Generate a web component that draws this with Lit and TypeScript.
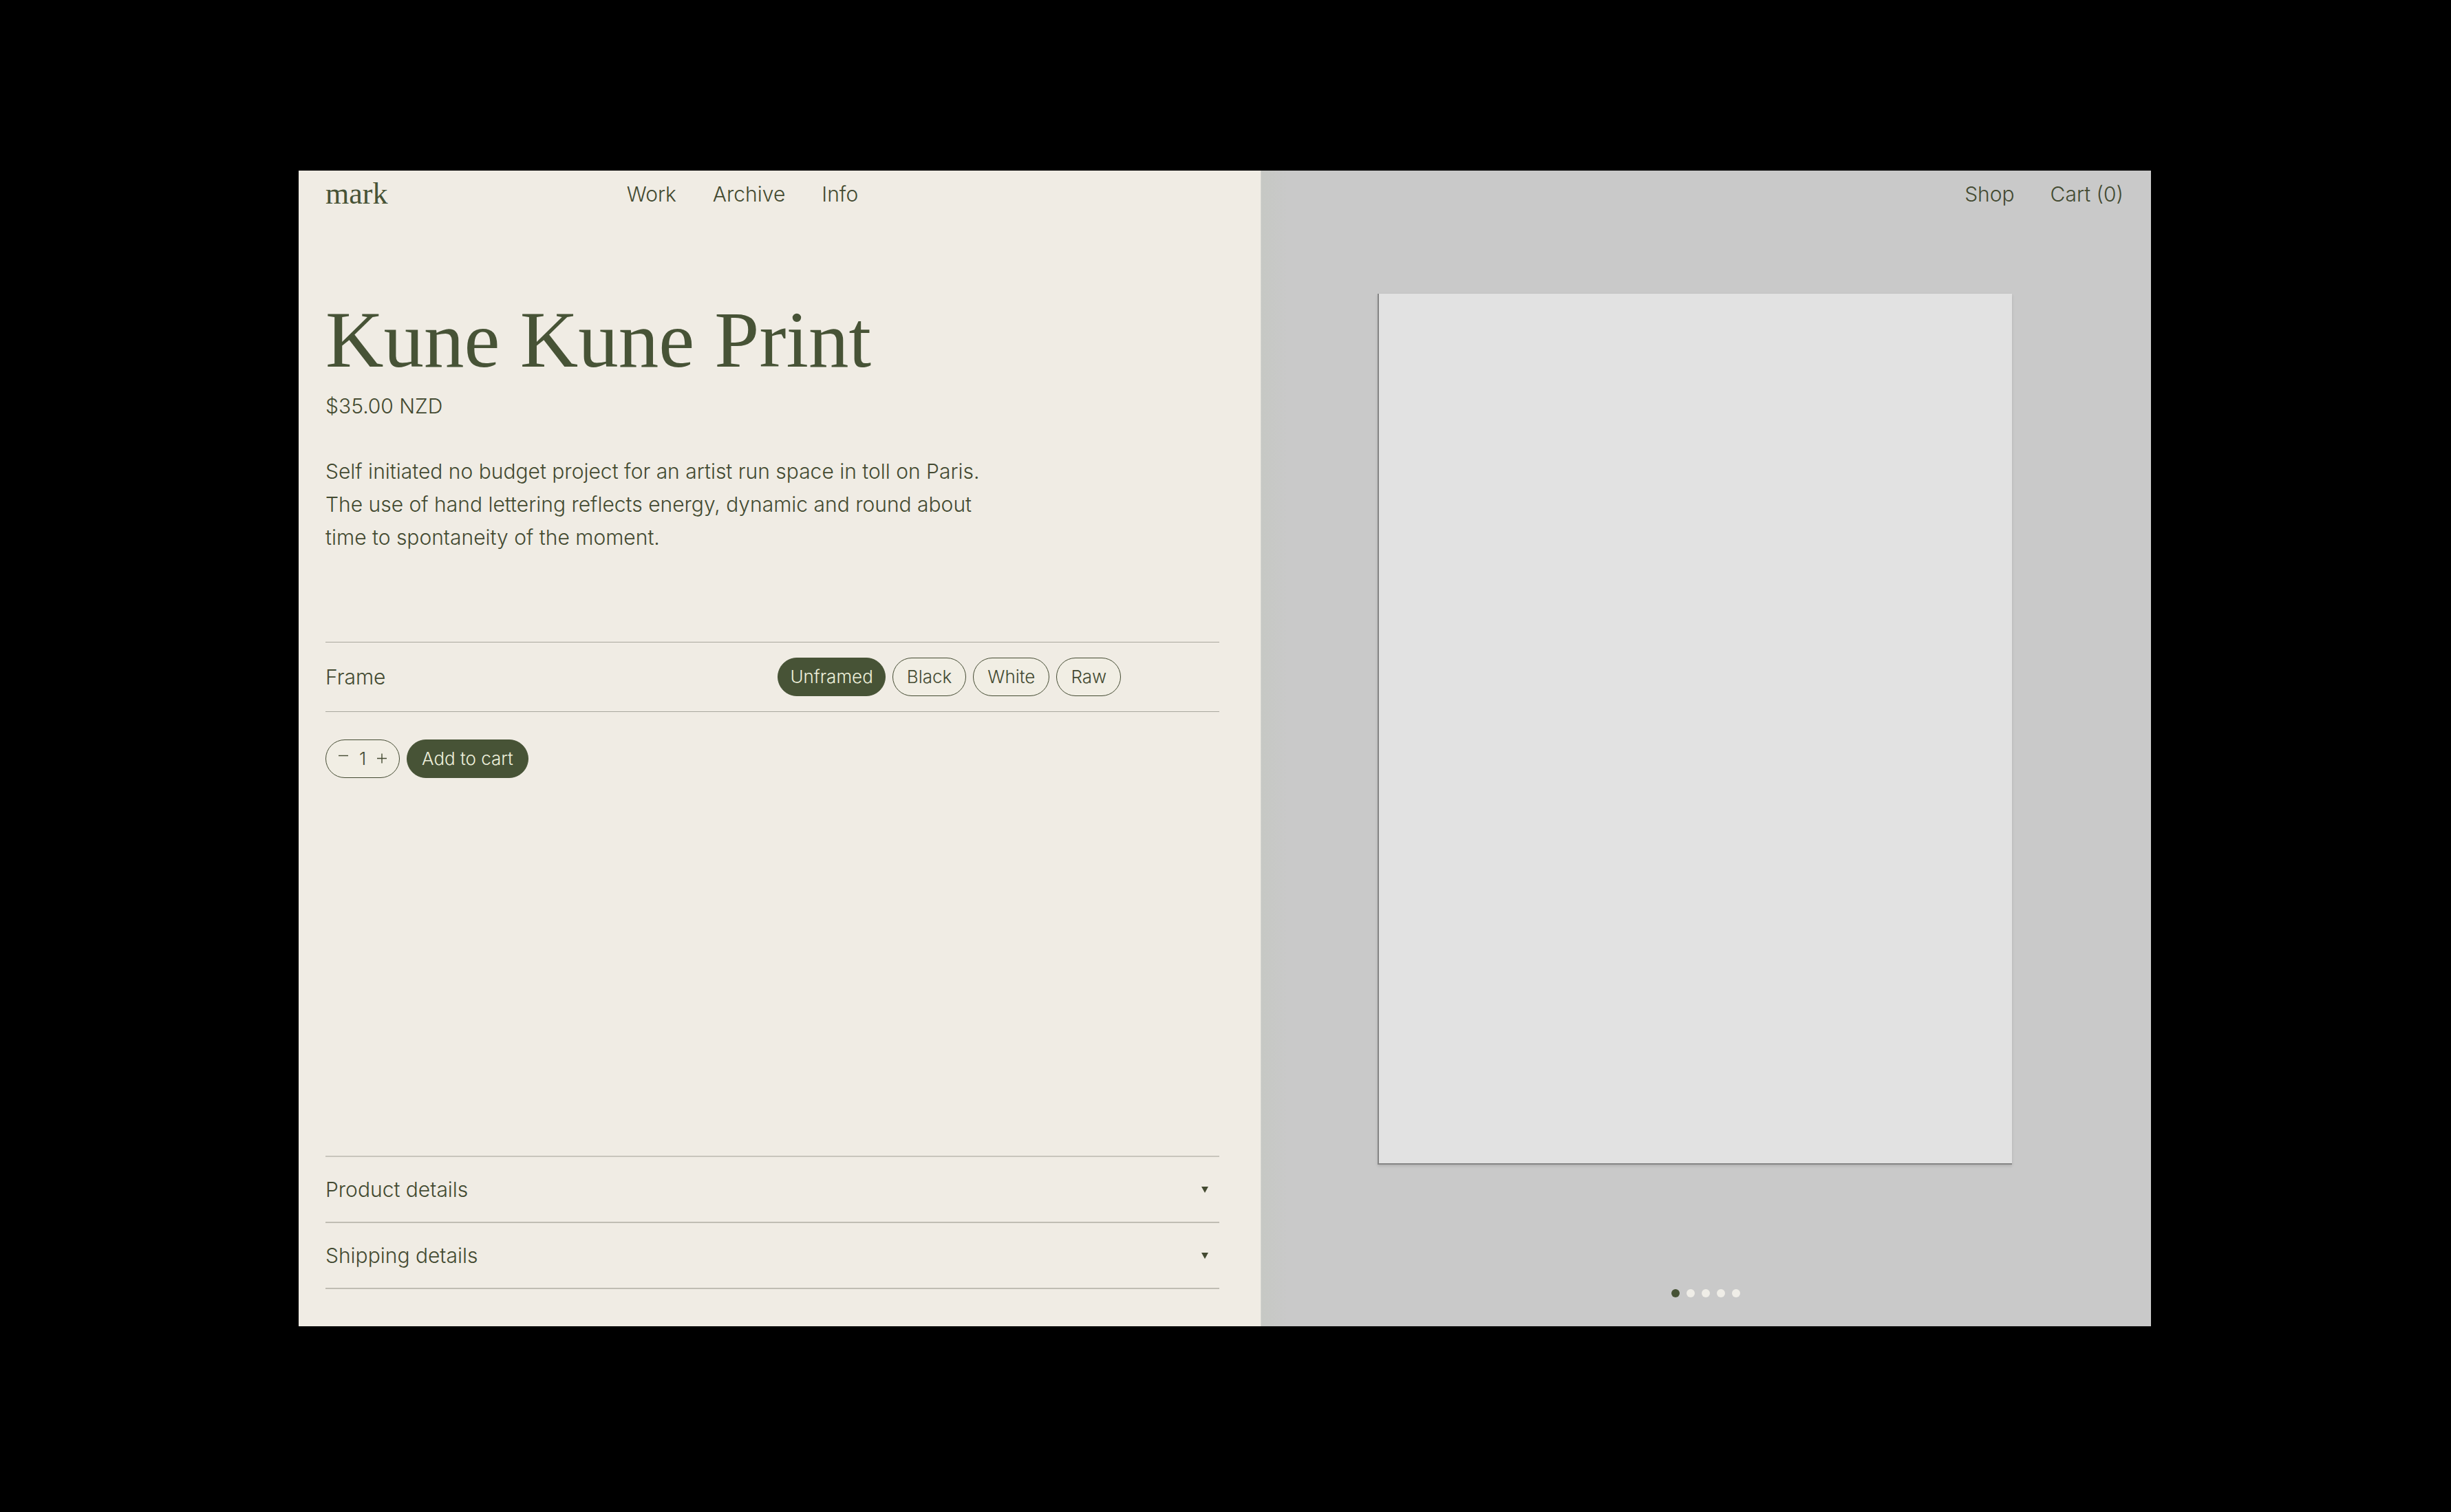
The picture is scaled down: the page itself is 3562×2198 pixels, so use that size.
import { LitElement, html, css } from "lit";
import { customElement, state } from "lit/decorators.js";
import { classMap } from "lit/directives/class-map.js";

const frames = ["Unframed", "Black", "White", "Raw"];
const sections = ["Product details", "Shipping details"];
const slides = [1, 2, 3, 4, 5];

@customElement("app-root")
export class AppRoot extends LitElement {
  @state() private frame = "Unframed";
  @state() private quantity = 1;
  @state() private slide = 1;

  static styles = css`
    :host {
      --ink: #434a31;
      --green: #475336;
      --cream: #f0ece4;
      --wall: #c9c9c9;
      display: flex;
      box-sizing: border-box;
      min-height: 100vh;
      padding: 248px 436px 270px 434px;
      background: #000;
      color: var(--ink);
      font: 350 30px/48px Inter, "Liberation Sans", sans-serif;
    }
    * {
      box-sizing: border-box;
      margin: 0;
    }
    button {
      padding: 0;
      border: 0;
      background: none;
      color: inherit;
      font: inherit;
      cursor: pointer;
    }
    a {
      color: inherit;
      text-decoration: none;
    }
    .page {
      flex: 1;
      display: grid;
      grid-template-columns: 27fr 25fr;
    }
    .product {
      display: flex;
      flex-direction: column;
      padding: 10px 60px 54px 39px;
      background: var(--cream);
    }
    .bar {
      display: grid;
      grid-template-columns: 337fr 663fr;
      align-items: center;
      height: 48px;
    }
    .logo {
      font: 400 44px/48px "Liberation Serif", serif;
      color: var(--green);
    }
    .links {
      display: flex;
      gap: 53px;
    }
    .title {
      margin-top: 128px;
      font: 400 117px/120px "Liberation Serif", serif;
      color: var(--green);
    }
    .price {
      margin-top: 12px;
    }
    .about {
      max-width: 980px;
      margin-top: 47px;
    }
    .options {
      display: grid;
      grid-template-columns: 1fr 1fr;
      column-gap: 16px;
      align-items: center;
      margin-top: 128px;
      padding: 22px 0;
      border: solid #a9a79e;
      border-width: 1px 0;
    }
    .pills {
      display: flex;
      gap: 10px;
    }
    .pill {
      position: relative;
      display: flex;
      align-items: center;
      height: 56px;
      padding: 0 20px;
      border: 1px solid var(--ink);
      border-radius: 28px;
      background: #f1eee4;
      font-size: 26px;
      line-height: 32px;
    }
    .pill.filled {
      padding: 0 17px;
      border-color: var(--green);
      background: var(--green);
      color: #eef0dc;
    }
    .pill.wide {
      padding: 0 21px;
    }
    .radio {
      position: absolute;
      inset: 0;
      width: 100%;
      height: 100%;
      appearance: none;
      border-radius: 28px;
      cursor: pointer;
    }
    .buy {
      display: flex;
      gap: 10px;
      margin-top: 40px;
    }
    .stepper {
      justify-content: space-between;
      width: 108px;
      padding: 0 17px;
    }
    .step {
      display: flex;
    }
    .sign {
      width: 16px;
      height: 26px;
      fill: none;
      stroke: var(--ink);
      stroke-width: 1.4;
    }
    .sections {
      margin-top: auto;
      padding: 0;
      border-top: 2px solid #c8c5bc;
      list-style: none;
    }
    .section {
      border-bottom: 2px solid #c0bdb3;
    }
    .toggle {
      display: flex;
      align-items: center;
      justify-content: space-between;
      width: 100%;
      height: 94px;
      padding-right: 16px;
    }
    .caret {
      width: 10px;
      height: 9px;
      fill: var(--ink);
    }
    .gallery {
      display: flex;
      flex-direction: column;
      padding: 10px 40px 42px;
      border-left: 1px solid #d3d4cf;
      background: linear-gradient(90deg, #c6c8c4, var(--wall) 3%);
    }
    .shop {
      display: flex;
      align-items: center;
      justify-content: flex-end;
      gap: 52px;
      height: 48px;
    }
    .print {
      aspect-ratio: 922 / 1266;
      margin: 121px 162px 0 129px;
      border: solid #858585;
      border-width: 0 0 2px 2px;
      background: #e2e2e2;
      box-shadow: 0 2px 4px rgb(0 0 0 / 12%);
    }
    .dots {
      display: flex;
      justify-content: center;
      gap: 10px;
      margin-top: auto;
    }
    .dot {
      width: 12px;
      height: 12px;
      border-radius: 50%;
      background: #efede7;
    }
    .dot.current {
      background: var(--green);
    }
  `;

  private step(by: number) {
    this.quantity = Math.max(1, this.quantity + by);
  }

  render() {
    return html`
      <div class="page">
        <main class="product">
          <header class="bar">
            <a class="logo" href="#">mark</a>
            <nav class="links">
              <a href="#work">Work</a>
              <a href="#archive">Archive</a>
              <a href="#info">Info</a>
            </nav>
          </header>

          <h1 class="title">Kune Kune Print</h1>
          <p class="price">$35.00 NZD</p>
          <p class="about">
            Self initiated no budget project for an artist run space in toll on Paris.
            The use of hand lettering reflects energy, dynamic and round about time to
            spontaneity of the moment.
          </p>

          <div class="options" role="radiogroup" aria-labelledby="frame-label">
            <span id="frame-label">Frame</span>
            <div class="pills">
              ${frames.map(
                (name) => html`
                  <label class=${classMap({ pill: true, filled: name === this.frame })}>
                    <input
                      class="radio"
                      type="radio"
                      name="frame"
                      .checked=${name === this.frame}
                      @change=${() => (this.frame = name)}
                    />${name}
                  </label>
                `
              )}
            </div>
          </div>

          <div class="buy">
            <div class="pill stepper">
              <button class="step" aria-label="Decrease quantity" @click=${() => this.step(-1)}>
                <svg class="sign" viewBox="0 0 16 26"><path d="M1 8.5h14" /></svg>
              </button>
              <output>${this.quantity}</output>
              <button class="step" aria-label="Increase quantity" @click=${() => this.step(1)}>
                <svg class="sign" viewBox="0 0 16 26"><path d="M1 12.5h14M8 5.5v14" /></svg>
              </button>
            </div>
            <button class="pill filled wide">Add to cart</button>
          </div>

          <ul class="sections">
            ${sections.map(
              (name) => html`
                <li class="section">
                  <button class="toggle" aria-expanded="false">
                    ${name}
                    <svg class="caret" viewBox="0 0 10 9"><path d="M0 0h10L5 9z" /></svg>
                  </button>
                </li>
              `
            )}
          </ul>
        </main>

        <section class="gallery">
          <nav class="shop">
            <a href="#shop">Shop</a>
            <a href="#cart">Cart (0)</a>
          </nav>
          <div class="print"></div>
          <div class="dots">
            ${slides.map(
              (n) => html`
                <button
                  class=${classMap({ dot: true, current: n === this.slide })}
                  aria-label="Image ${n}"
                  @click=${() => (this.slide = n)}
                ></button>
              `
            )}
          </div>
        </section>
      </div>
    `;
  }
}
